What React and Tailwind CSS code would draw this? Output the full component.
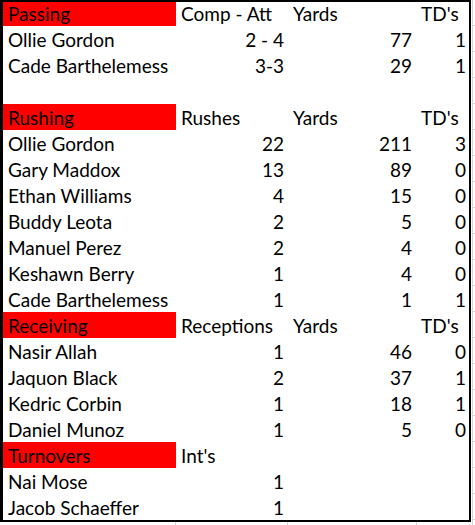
const sections = [
  { head: "Passing", cols: ["Comp - Att", "Yards", "TD's"] },
  { name: "Ollie Gordon", vals: ["2 - 4", "77", "1"] },
  { name: "Cade Barthelemess", vals: ["3-3", "29", "1"] },
  {},
  { head: "Rushing", cols: ["Rushes", "Yards", "TD's"] },
  { name: "Ollie Gordon", vals: ["22", "211", "3"] },
  { name: "Gary Maddox", vals: ["13", "89", "0"] },
  { name: "Ethan Williams", vals: ["4", "15", "0"] },
  { name: "Buddy Leota", vals: ["2", "5", "0"] },
  { name: "Manuel Perez", vals: ["2", "4", "0"] },
  { name: "Keshawn Berry", vals: ["1", "4", "0"] },
  { name: "Cade Barthelemess", vals: ["1", "1", "1"] },
  { head: "Receiving", cols: ["Receptions", "Yards", "TD's"] },
  { name: "Nasir Allah", vals: ["1", "46", "0"] },
  { name: "Jaquon Black", vals: ["2", "37", "1"] },
  { name: "Kedric Corbin", vals: ["1", "18", "1"] },
  { name: "Daniel Munoz", vals: ["1", "5", "0"] },
  { head: "Turnovers", cols: ["Int's", "", ""] },
  { name: "Nai Mose", vals: ["1", "", ""] },
  { name: "Jacob Schaeffer", vals: ["1", "", ""] },
];

function Row({ row, first }) {
  const h = first ? "h-[24px]" : "h-[26px]";
  const cell = `${h} flex items-end pb-[3px] leading-none whitespace-nowrap`;
  if (row.head) {
    return (
      <div className={`grid grid-cols-[173px_112px_129px_52px] ${h}`}>
        <div className={`${cell} bg-[#ff0000] pl-[5px]`}>{row.head}</div>
        <div className={`${cell} pl-[5px]`}>{row.cols[0]}</div>
        <div className={`${cell} pl-[5px]`}>{row.cols[1]}</div>
        <div className={`${cell} pl-[4px]`}>{row.cols[2]}</div>
      </div>
    );
  }
  if (!row.name) return <div className={h}></div>;
  return (
    <div className={`grid grid-cols-[173px_112px_129px_52px] ${h}`}>
      <div className={`${cell} pl-[5px]`}>{row.name}</div>
      <div className={`${cell} justify-end pr-[4px]`}>{row.vals[0]}</div>
      <div className={`${cell} justify-end pr-[5px]`}>{row.vals[1]}</div>
      <div className={`${cell} justify-end pr-[3px]`}>{row.vals[2]}</div>
    </div>
  );
}

export default function App() {
  return (
    <div className="w-[475px] h-[525px] bg-white overflow-hidden text-black text-[19px] font-[Lato,sans-serif]">
      <div className="flex">
        {/* the stat sheet */}
        <div className="w-[471px] shrink-0 border-t-2 border-b-2 border-l-[3px] border-r-2 border-black">
          {sections.map((row, i) => (
            <Row key={i} row={row} first={i === 0} />
          ))}
        </div>
        {/* gridline stubs to the right */}
        <div className="flex-1 flex flex-col border-l border-[#d4d4d4] ml-[1px]">
          {sections.map((_, i) => (
            <div key={i} className="h-[26px] shrink-0 border-b border-[#d4d4d4]"></div>
          ))}
        </div>
      </div>
      {/* gridline stubs below */}
      <div className="flex h-[10px]">
        <div className="w-[176px] border-r border-[#d4d4d4]"></div>
        <div className="w-[112px] border-r border-[#d4d4d4]"></div>
        <div className="w-[129px] border-r border-[#d4d4d4]"></div>
        <div className="w-[56px] border-r border-[#d4d4d4]"></div>
      </div>
    </div>
  );
}
